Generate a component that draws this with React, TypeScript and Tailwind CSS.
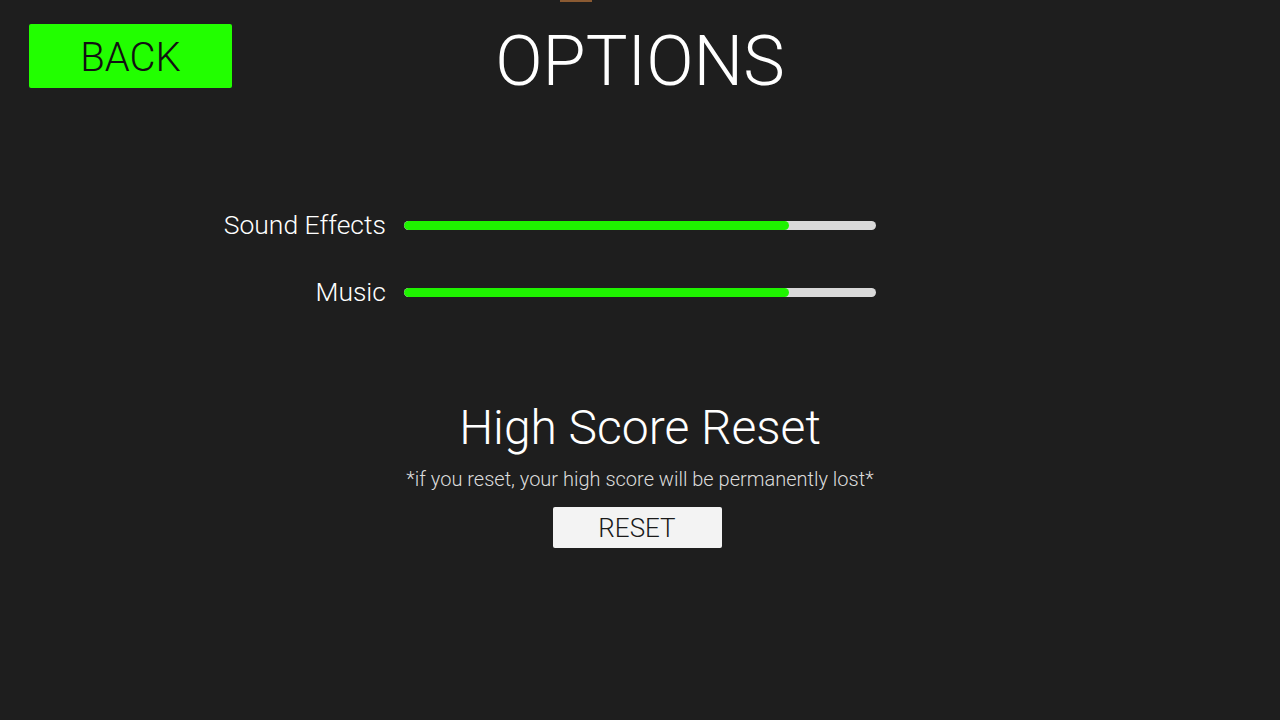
import React from "react";

const font = { fontFamily: "Roboto, 'Liberation Sans', sans-serif" };

function Slider({ label, value }: { label: string; value: number }) {
  return (
    <div className="flex items-center h-[20px]">
      <div className="w-[200px] text-right text-[26.5px] leading-none font-light text-white">{label}</div>
      <div className="ml-[18px] w-[472px] h-[9px] rounded-full bg-[#d9d9d9] overflow-hidden">
        <div className="h-full rounded-full bg-[#1ff200]" style={{ width: `${value}%` }} />
      </div>
    </div>
  );
}

export default function App() {
  return (
    <div className="relative w-[1280px] h-[720px] bg-[#1e1e1e] overflow-hidden" style={font}>
      <div className="absolute left-[560px] top-0 w-[32px] h-[2px] bg-[#8a5a32]" />
      <div className="grid grid-cols-[1fr_auto_1fr] items-start pt-[24px] h-[90px]">
        <div className="pl-[29px]">
          <button className="w-[203px] h-[64px] rounded-[2px] bg-[#22ff00] text-[#111] text-[40px] font-light leading-none flex items-center justify-center pt-[3px]">
            BACK
          </button>
        </div>
        <h1 className="text-white text-[70px] font-light leading-none mt-[2px]">OPTIONS</h1>
        <div />
      </div>
      <div className="ml-[186px] mt-[125px] flex flex-col gap-[47px]">
        <Slider label="Sound Effects" value={81.5} />
        <Slider label="Music" value={81.5} />
      </div>
      <div className="mt-[102px] flex flex-col items-center">
        <div className="text-white text-[48px] font-light leading-none">High Score Reset</div>
        <div className="mt-[17px] text-[#dcdcdc] text-[20px] font-light leading-none">
          *if you reset, your high score will be permanently lost*
        </div>
        <button className="mt-[18px] mr-[6px] w-[169px] h-[41px] rounded-[2px] bg-[#f3f3f3] text-[#1a1a1a] text-[26px] font-light leading-none flex items-center justify-center">
          RESET
        </button>
      </div>
    </div>
  );
}
